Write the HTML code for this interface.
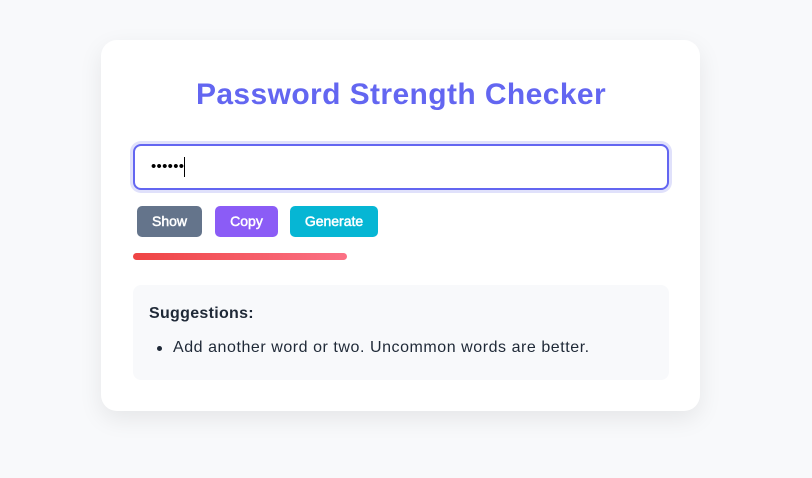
<!DOCTYPE html>
<html><head><style>
*{box-sizing:border-box;margin:0;padding:0}
body{width:812px;height:478px;background:#f8f9fb;font-family:"Liberation Sans",sans-serif;position:relative;overflow:hidden}
.card{position:absolute;left:101px;top:40px;width:599px;height:371px;background:#fff;border-radius:16px;box-shadow:0 8px 24px rgba(0,0,0,0.08)}
h1{position:absolute;left:0;width:802px;top:78px;text-align:center;color:#6366f1;font-size:30px;font-weight:bold;letter-spacing:0.4px}
.inp{position:absolute;left:133px;top:144px;width:536px;height:46px;border:2px solid #6366f1;border-radius:8px;box-shadow:0 0 0 3px #e0e1fb;background:#fff;font-size:15px;padding:11px 16px;letter-spacing:0.3px}
.caret{display:inline-block;width:1px;height:20px;background:#000;vertical-align:middle;margin-left:0}
.btn{position:absolute;top:206px;height:31px;border-radius:5px;color:#fff;font-size:14px;text-align:center;line-height:31px;-webkit-text-stroke:0.5px #fff}
.bar{position:absolute;left:133px;top:253px;width:214px;height:7px;border-radius:4px;background:linear-gradient(90deg,#ef4444,#fb7185)}
.sug{position:absolute;left:133px;top:285px;width:536px;height:95px;background:#f8f9fb;border-radius:8px}
.sug b{position:absolute;left:16px;top:20px;font-size:16px;color:#1f2937;letter-spacing:0.3px}
.sug div{position:absolute;left:40px;top:54px;font-size:16px;color:#1f2937;letter-spacing:0.55px}
.sug div:before{content:"";position:absolute;left:-16px;top:7px;width:5px;height:5px;border-radius:50%;background:#1f2937}
</style></head><body>
<div class="card"></div>
<h1>Password Strength Checker</h1>
<div class="inp">••••••<span class="caret"></span></div>
<div class="btn" style="left:137px;width:65px;background:#64748b">Show</div>
<div class="btn" style="left:215px;width:63px;background:#8b5cf6">Copy</div>
<div class="btn" style="left:290px;width:88px;background:#06b6d4">Generate</div>
<div class="bar"></div>
<div class="sug"><b>Suggestions:</b><div>Add another word or two. Uncommon words are better.</div></div>
</body></html>
